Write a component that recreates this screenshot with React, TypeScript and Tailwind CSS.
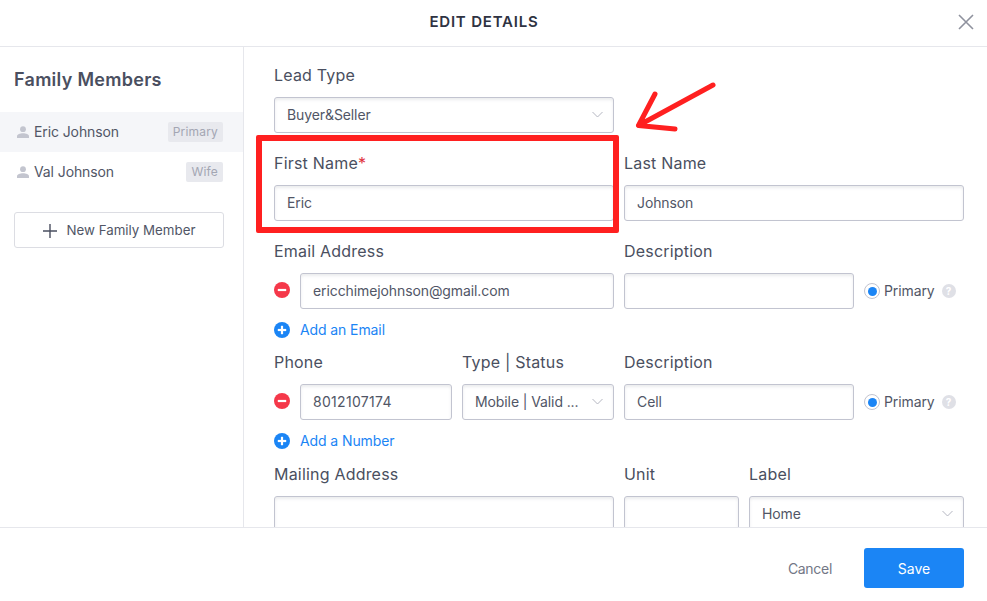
import React from "react";

const inputCls = "h-9 rounded-[3px] border border-[#c2c4d0] bg-white shadow-[inset_0_2px_3px_rgba(60,65,90,0.1)] pl-3 pr-[10px] pb-[1px] flex items-center text-[14px] tracking-[-0.1px] text-[#515666] overflow-hidden whitespace-nowrap";
const labelCls = "h-5 mb-3 flex items-center text-[16px] tracking-[0.2px] font-normal text-[#4a4f60] whitespace-nowrap";

function Chevron() {
  return (
    <svg width="11" height="7" viewBox="0 0 11 7" fill="none" className="ml-auto shrink-0">
      <path d="M0.5 1l5 5 5-5" stroke="#b4b6c1" strokeWidth="1" />
    </svg>
  );
}

function Field({ label, value, className = "" }: { label?: React.ReactNode; value?: string; className?: string }) {
  return (
    <div className={className}>
      {label ? <div className={labelCls}>{label}</div> : null}
      <div className={inputCls}>{value}</div>
    </div>
  );
}

function SelectField({ label, value, className = "" }: { label?: string; value: string; className?: string }) {
  return (
    <div className={className}>
      {label ? <div className={labelCls}>{label}</div> : null}
      <div className={inputCls}>
        <span>{value}</span>
        <Chevron />
      </div>
    </div>
  );
}

function CircleIcon({ color, plus, className = "" }: { color: string; plus?: boolean; className?: string }) {
  return (
    <svg width="16" height="16" viewBox="0 0 16 16" className={`shrink-0 ${className}`}>
      <circle cx="8" cy="8" r="8" fill={color} />
      <path d="M3.8 8h8.4" stroke="white" strokeWidth="2.2" />
      {plus ? <path d="M8 3.8v8.4" stroke="white" strokeWidth="2.2" /> : null}
    </svg>
  );
}

function Person() {
  return (
    <svg width="12" height="12" viewBox="0 0 12 12" className="shrink-0">
      <circle cx="6" cy="3.2" r="2.9" fill="#c3c5cf" />
      <path d="M0 12V10.2C0 8.2 3 7.2 6 7.2s6 1 6 3V12z" fill="#c3c5cf" />
    </svg>
  );
}

function PrimaryRadio() {
  return (
    <div className="ml-[10px] flex h-9 items-center">
      <div className="flex h-4 w-4 items-center justify-center rounded-full border border-[#c2c4d0] bg-white">
        <div className="h-[9px] w-[9px] rounded-full bg-[#1b85f5]" />
      </div>
      <span className="ml-[4px] pb-[1px] text-[14px] tracking-[-0.1px] text-[#515666]">Primary</span>
      <span className="ml-[7px] flex h-[14px] w-[14px] items-center justify-center rounded-full bg-[#dfe0e6] text-[10px] font-bold leading-none text-white">?</span>
    </div>
  );
}

function AddLink({ text, className = "" }: { text: string; className?: string }) {
  return (
    <div className={`flex h-5 items-center gap-[10px] ${className}`}>
      <CircleIcon color="#1b85f5" plus />
      <span className="pb-[1px] text-[14px] tracking-[-0.1px] text-[#1b85f5]">{text}</span>
    </div>
  );
}

function Member({ name, tag, active }: { name: string; tag: string; active?: boolean }) {
  return (
    <div className={`flex h-10 items-center pl-[17px] pr-5 ${active ? "bg-[#f5f6f9]" : ""}`}>
      <Person />
      <span className="ml-[5px] pb-[1px] text-[14px] tracking-[-0.1px] text-[#515666]">{name}</span>
      <span className="ml-auto flex h-5 items-center rounded-[2px] bg-[#e8e9ee] px-[5px] text-[12px] tracking-[0.2px] text-[#a3a6b3]">{tag}</span>
    </div>
  );
}

export default function App() {
  return (
    <div className="relative flex h-[601px] w-[987px] flex-col overflow-hidden bg-white font-['Inter',sans-serif]">
      <header className="relative flex h-[47px] shrink-0 items-center justify-center border-b border-[#e6e7ec] pr-[19px] pb-[1px]">
        <h1 className="text-[15px] font-semibold tracking-[0.8px] text-[#2f3342]">EDIT DETAILS</h1>
        <svg width="16" height="16" viewBox="0 0 16 16" className="absolute right-[13px] top-[14px]">
          <path d="M1 1l14 14M15 1L1 15" stroke="#8f929e" strokeWidth="1.6" />
        </svg>
      </header>

      <div className="flex min-h-0 flex-1">
        <aside className="w-[244px] shrink-0 border-r border-[#e6e7ec]">
          <h2 className="mt-[21px] mb-[20px] h-6 pl-[14px] text-[18px] leading-6 font-semibold tracking-[0.28px] text-[#4a4f60]">Family Members</h2>
          <Member name="Eric Johnson" tag="Primary" active />
          <Member name="Val Johnson" tag="Wife" />
          <div className="ml-[14px] mr-[19px] mt-5 flex h-9 items-center justify-center rounded-[3px] border border-[#dcdde3] pt-[1px] text-[13.3px] text-[#515666]">
            <svg width="14" height="14" viewBox="0 0 14 14" className="mr-[10px]">
              <path d="M7 0v14M0 7h14" stroke="#4a4f60" strokeWidth="1.4" />
            </svg>
            New Family Member
          </div>
        </aside>

        <main className="min-w-0 flex-1 overflow-hidden pt-[18px] pl-[30px] pr-[23px]">
          <SelectField label="Lead Type" value="Buyer&Seller" className="w-[340px]" />

          <div className="mt-5 flex gap-[10px]">
            <Field className="w-[340px]" label={<>First Name<span className="text-[#e0323c]">*</span></>} value="Eric" />
            <Field className="w-[340px]" label="Last Name" value="Johnson" />
          </div>

          <div className="mt-5 flex gap-[10px]">
            <div className="w-[340px]">
              <div className={labelCls}>Email Address</div>
              <div className="flex items-center gap-[10px]">
                <CircleIcon color="#f5384a" className="mb-[3px]" />
                <div className={`${inputCls} flex-1`}>ericchimejohnson@gmail.com</div>
              </div>
            </div>
            <div className="flex items-end">
              <Field className="w-[230px]" label="Description" />
              <PrimaryRadio />
            </div>
          </div>

          <AddLink text="Add an Email" className="mt-[11px]" />

          <div className="mt-3 flex gap-[10px]">
            <div className="w-[178px]">
              <div className={labelCls}>Phone</div>
              <div className="flex items-center gap-[10px]">
                <CircleIcon color="#f5384a" className="mb-[3px]" />
                <div className={`${inputCls} flex-1 tracking-[0.3px]`}>8012107174</div>
              </div>
            </div>
            <SelectField className="w-[152px]" label="Type | Status" value="Mobile | Valid ..." />
            <div className="flex items-end">
              <Field className="w-[230px]" label="Description" value="Cell" />
              <PrimaryRadio />
            </div>
          </div>

          <AddLink text="Add a Number" className="mt-[11px]" />

          <div className="mt-[13px] flex gap-[10px]">
            <Field className="w-[340px]" label="Mailing Address" />
            <Field className="w-[115px]" label="Unit" />
            <SelectField className="w-[215px]" label="Label" value="Home" />
          </div>
        </main>
      </div>

      <footer className="flex h-[74px] shrink-0 items-center justify-end border-t border-[#e6e7ec] pt-[7px] pr-[23px]">
        <span className="mr-8 text-[14px] tracking-[-0.3px] text-[#737786]">Cancel</span>
        <button className="h-10 w-[100px] rounded-[3px] bg-[#1b85f5] text-[14px] font-normal text-white">Save</button>
      </footer>

      <div className="absolute left-[256px] top-[135px] h-[98px] w-[363px] rounded-[2px] border-[6px] border-[#ff2020]" />
      <svg width="90" height="60" viewBox="0 0 90 60" className="absolute left-[632px] top-[78px]" fill="none">
        <path d="M81 7L6.5 47.5M23 16L6.5 47.5L43 51" stroke="#ff2020" strokeWidth="5" strokeLinecap="round" strokeLinejoin="round" />
      </svg>
    </div>
  );
}
